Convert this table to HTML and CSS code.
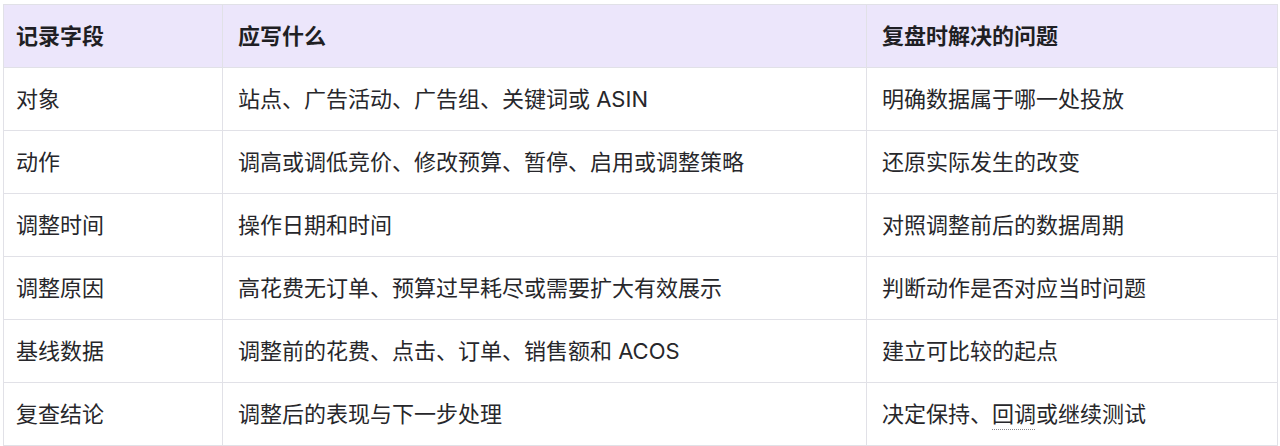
FILE: index.html
```html
<!DOCTYPE html>
<html lang="zh-CN">
<head>
<meta charset="utf-8">
<title>复盘记录字段</title>
<link rel="stylesheet" href="styles.css">
</head>
<body>
<div class="wrap">
<table class="record">
  <colgroup>
    <col class="c1">
    <col class="c2">
    <col class="c3">
  </colgroup>
  <thead>
    <tr><th>记录字段</th><th>应写什么</th><th>复盘时解决的问题</th></tr>
  </thead>
  <tbody>
    <tr><td>对象</td><td>站点、广告活动、广告组、关键词或 ASIN</td><td>明确数据属于哪一处投放</td></tr>
    <tr><td>动作</td><td>调高或调低竞价、修改预算、暂停、启用或调整策略</td><td>还原实际发生的改变</td></tr>
    <tr><td>调整时间</td><td>操作日期和时间</td><td>对照调整前后的数据周期</td></tr>
    <tr><td>调整原因</td><td>高花费无订单、预算过早耗尽或需要扩大有效展示</td><td>判断动作是否对应当时问题</td></tr>
    <tr><td>基线数据</td><td>调整前的花费、点击、订单、销售额和 ACOS</td><td>建立可比较的起点</td></tr>
    <tr><td>复查结论</td><td>调整后的表现与下一步处理</td><td>决定保持、<span class="dotted">回调</span>或继续测试</td></tr>
  </tbody>
</table>
</div>
</body>
</html>
```

FILE: styles.css
```css
html, body {
  margin: 0;
  padding: 0;
  background: #ffffff;
}
.wrap {
  padding: 4px 3px 0 3px;
}
.record {
  width: 1274px;
  border-collapse: collapse;
  table-layout: fixed;
  font-family: Inter, "Noto Sans CJK SC", sans-serif;
  font-size: 22px;
  color: #27272b;
}
.c1 { width: 219px; }
.c2 { width: 644px; }
.c3 { width: 411px; }
.record th,
.record td {
  border: 1px solid #e1e1e7;
  text-align: left;
  padding: 15px 15px;
  line-height: 32px;
  white-space: nowrap;
}
.record th:first-child,
.record td:first-child {
  padding-left: 12px;
}
.record th {
  background: #ece6fb;
  font-weight: 600;
  color: #1f1f24;
}
.dotted {
  text-decoration: underline dotted #8a8a90;
  text-underline-offset: 7px;
  text-decoration-thickness: 1px;
}
```
